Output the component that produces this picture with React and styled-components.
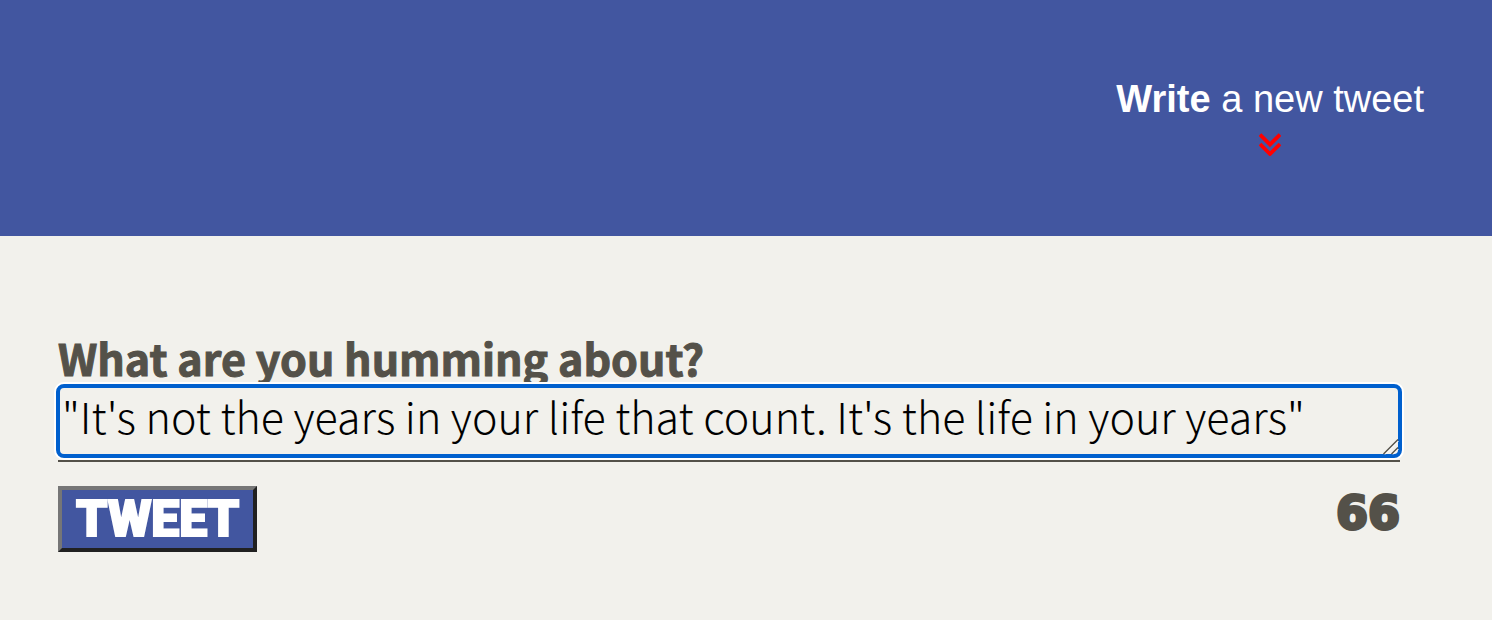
import React, { useState } from "react";
import styled, { createGlobalStyle } from "styled-components";

const GlobalStyle = createGlobalStyle`
  *, *::before, *::after { box-sizing: border-box; }
  body {
    margin: 0;
    background: #f2f1ec;
    color: #545149;
    font-family: "Noto Sans CJK JP", "Noto Sans", sans-serif;
  }
`;

const Header = styled.header`
  display: flex;
  justify-content: flex-end;
  background: #4256a0;
  padding: 76px 68px 80px;
`;

const Compose = styled.a`
  display: flex;
  flex-direction: column;
  align-items: center;
  gap: 10px;
  color: #fff;
  font-family: "Liberation Sans", Arial, sans-serif;
  font-size: 38px;
  line-height: 46px;
  text-decoration: none;
`;

const Chevrons = styled.svg`
  display: block;
  width: 22px;
  height: 24px;
  fill: none;
  stroke: #f00;
  stroke-width: 3.8;
`;

const Form = styled.form`
  display: flex;
  flex-direction: column;
  padding: 96px 92px 68px 58px;
`;

const Label = styled.label`
  padding-bottom: 4px;
  font-size: 43px;
  font-weight: 700;
  line-height: 50px;
  -webkit-text-stroke: 1px currentColor;
`;

const Field = styled.div`
  position: relative;
  padding-bottom: 4px;
  border-bottom: 2px solid #545149;
`;

const Message = styled.textarea`
  display: block;
  width: 100%;
  height: 70px;
  padding: 0 4px;
  border: 0;
  border-radius: 6px;
  outline: 4px solid #0060ce;
  outline-offset: -2px;
  box-shadow: 0 0 0 4px #fff;
  background: #f2f1ec;
  color: #000;
  font: inherit;
  font-size: 43px;
  font-weight: 300;
  line-height: 58px;
  overflow: hidden;
  resize: none;
`;

const Grip = styled.svg`
  position: absolute;
  right: 1px;
  bottom: 5px;
  width: 16px;
  height: 16px;
  fill: none;
  stroke: #545149;
  pointer-events: none;
`;

const Actions = styled.div`
  display: flex;
  justify-content: space-between;
  align-items: flex-start;
  padding-top: 24px;
`;

const Submit = styled.button`
  padding: 0 14px;
  border: 4px solid;
  border-color: #767676 #212121 #212121 #767676;
  background: #4256a0;
  color: #fff;
  font-family: Roboto, sans-serif;
  font-size: 50px;
  font-weight: 900;
  line-height: 58px;
  -webkit-text-stroke: 2px currentColor;
`;

const Counter = styled.output`
  font-family: "DejaVu Sans", sans-serif;
  font-size: 46px;
  font-weight: 700;
  line-height: 54px;
  -webkit-text-stroke: 3px currentColor;
`;

export default function App() {
  const [text, setText] = useState(
    '"It\'s not the years in your life that count. It\'s the life in your years" '
  );

  return (
    <>
      <GlobalStyle />
      <Header>
        <Compose href="#tweet-text">
          <span><strong>Write</strong> a new tweet</span>
          <Chevrons viewBox="0 0 22 24" aria-hidden="true">
            <path d="M1 2.5 11 12.5 21 2.5M1 12 11 22 21 12" />
          </Chevrons>
        </Compose>
      </Header>
      <Form onSubmit={(event) => event.preventDefault()}>
        <Label htmlFor="tweet-text">What are you humming about?</Label>
        <Field>
          <Message
            id="tweet-text"
            rows={1}
            spellCheck={false}
            value={text}
            onChange={(event) => setText(event.target.value)}
          />
          <Grip viewBox="0 0 16 16" aria-hidden="true">
            <path stroke="#fff" d="M2 15.5 15.5 2M10 15.5 15.5 10" />
            <path d="M.5 15 15 .5M8.5 15 15 8.5" strokeWidth="1.4" />
          </Grip>
        </Field>
        <Actions>
          <Submit type="submit">TWEET</Submit>
          <Counter htmlFor="tweet-text">{140 - text.length}</Counter>
        </Actions>
      </Form>
    </>
  );
}
